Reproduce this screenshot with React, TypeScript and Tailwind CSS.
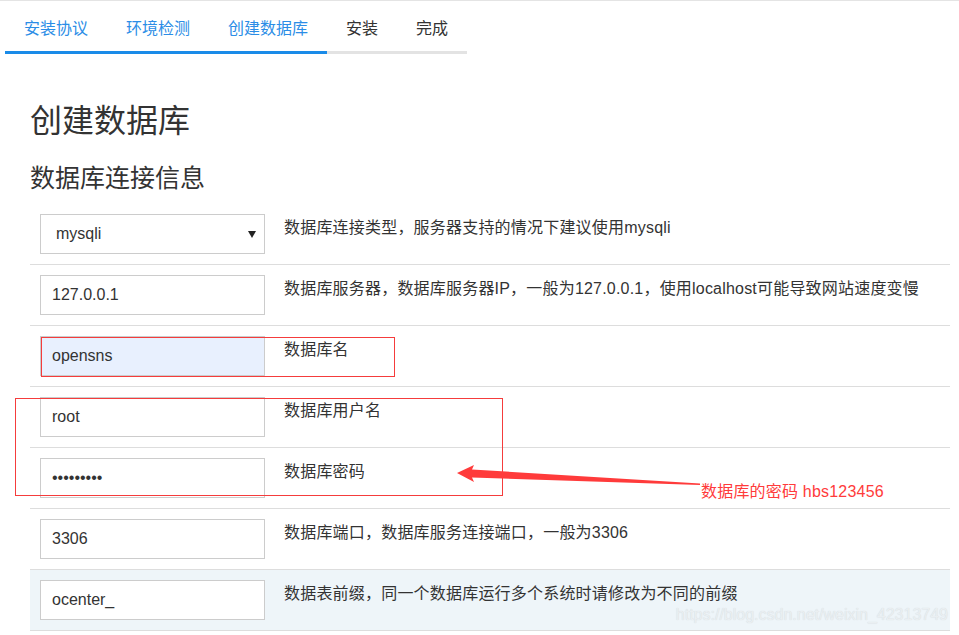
import React from "react";

type Row = {
  name: string;
  value: string;
  text: string;
  kind?: "select" | "password";
  filled?: boolean;
  active?: boolean;
};

const steps = [
  { title: "安装协议", done: true },
  { title: "环境检测", done: true },
  { title: "创建数据库", done: true },
  { title: "安装", done: false },
  { title: "完成", done: false },
];

const rows: Row[] = [
  {
    name: "db_type",
    value: "mysqli",
    text: "数据库连接类型，服务器支持的情况下建议使用mysqli",
    kind: "select",
  },
  {
    name: "db_host",
    value: "127.0.0.1",
    text: "数据库服务器，数据库服务器IP，一般为127.0.0.1，使用localhost可能导致网站速度变慢",
  },
  { name: "db_name", value: "opensns", text: "数据库名", filled: true },
  { name: "db_user", value: "root", text: "数据库用户名" },
  { name: "db_pwd", value: "hbs123456", text: "数据库密码", kind: "password" },
  {
    name: "db_port",
    value: "3306",
    text: "数据库端口，数据库服务连接端口，一般为3306",
  },
  {
    name: "db_prefix",
    value: "ocenter_",
    text: "数据表前缀，同一个数据库运行多个系统时请修改为不同的前缀",
    active: true,
  },
];

const inputStyle =
  "w-[225px] h-[40px] border border-[#cccccc] px-[11px] text-[16px] text-[#333] outline-none";

const FieldCell = ({ row }: { row: Row }) => {
  if (row.kind === "select") {
    return (
      <div className="relative w-[225px] h-[40px]">
        <select
          defaultValue={row.value}
          className="w-full h-full appearance-none border border-[#cccccc] bg-white pl-[15px] text-[16px] text-[#333] outline-none"
        >
          <option value="mysqli">mysqli</option>
          <option value="mysql">mysql</option>
        </select>
        <svg
          className="absolute right-[9px] top-[17px]"
          width="8"
          height="8"
          viewBox="0 0 8 8"
        >
          <polygon points="0,0 8,0 4,7" fill="#222" />
        </svg>
      </div>
    );
  }
  return (
    <input
      type={row.kind === "password" ? "password" : "text"}
      name={row.name}
      defaultValue={row.value}
      className={`${inputStyle} ${row.filled ? "bg-[#e8f0fe]" : "bg-white"}`}
    />
  );
};

export default function App() {
  return (
    <div className="relative h-[635px] w-[959px] overflow-hidden bg-white font-['Liberation_Sans','Noto_Sans_CJK_SC',sans-serif] text-[#333]">
      <div className="border-t border-[#e4e4e4]">
        <ul className="ml-[5px] flex">
          {steps.map((s, i) => (
            <li
              key={s.title}
              className={`px-[19px] pt-[16px] pb-[10px] text-[16px] leading-[24px] border-b-[3px] ${
                s.done ? "text-[#2b8de6]" : "text-[#333]"
              } ${i < 3 ? "border-[#1a8be8]" : "border-[#e3e3e3]"}`}
            >
              {s.title}
            </li>
          ))}
        </ul>
      </div>

      <div className="px-[30px]">
        <h1 className="mt-[49px] text-[32px] leading-[36px] font-normal">
          创建数据库
        </h1>
        <h2 className="mt-[24px] text-[25px] leading-[30px] font-normal">
          数据库连接信息
        </h2>

        <div className="mt-[10px] w-[920px] border-b border-[#dddddd]">
          {rows.map((row, i) => (
            <div
              key={row.name}
              className={`flex border-t ${
                i === 0 ? "border-transparent" : "border-[#dddddd]"
              } ${row.active ? "bg-[#eef5f9]" : ""}`}
            >
              <div className="pl-[10px] pr-[19px] pt-[10px] pb-[10px]">
                <FieldCell row={row} />
              </div>
              <div className="pt-[11px] text-[16px] leading-[26px] tracking-[0.2px]">
                {row.text}
              </div>
            </div>
          ))}
        </div>
      </div>

      {/* annotations drawn over the screenshot */}
      <svg
        className="pointer-events-none absolute left-0 top-0"
        width="959"
        height="635"
      >
        <rect
          x="41.5"
          y="337.5"
          width="353"
          height="39"
          fill="none"
          stroke="#f53c3c"
          strokeWidth="1"
        />
        <rect
          x="15.5"
          y="398.5"
          width="487"
          height="97"
          fill="none"
          stroke="#f53c3c"
          strokeWidth="1"
        />
        <polygon
          points="457,473 474,465 472,469.5 700,483.5 700,485 472,477.5 474,482"
          fill="#ff3b3b"
        />
      </svg>
      <div className="absolute left-[701px] top-[481px] text-[16px] leading-[22px] tracking-[0.2px] text-[#ff3b3b]">
        数据库的密码 hbs123456
      </div>
      <div className="absolute right-[11px] top-[605px] text-[16px] leading-[20px] text-[#eaeff2] [text-shadow:0_0_1px_#cdd3d7]">
        https://blog.csdn.net/weixin_42313749
      </div>
    </div>
  );
}
